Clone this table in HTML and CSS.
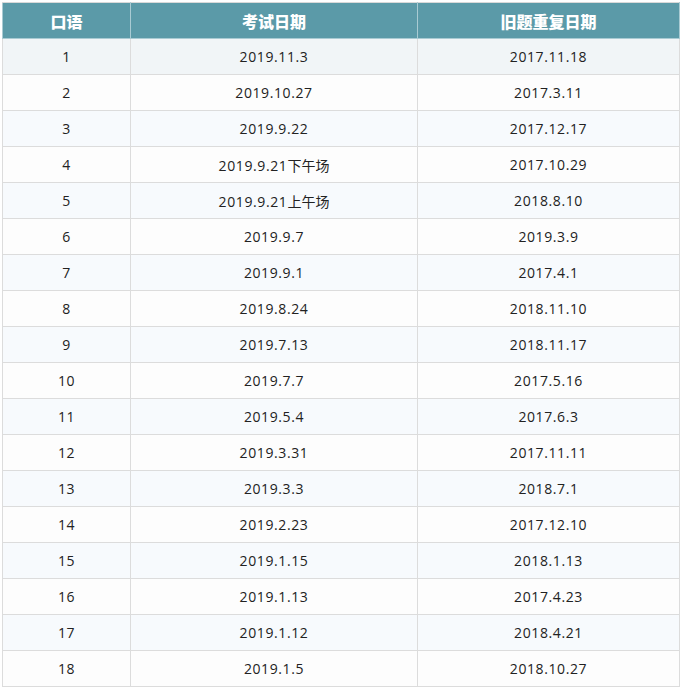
FILE: index.html
```html
<!DOCTYPE html>
<html lang="zh">
<head>
<meta charset="utf-8">
<link rel="stylesheet" href="styles.css">
</head>
<body>
<table class="tbl">
<colgroup><col class="c1"><col class="c2"><col class="c3"></colgroup>
<thead>
<tr><th>口语</th><th>考试日期</th><th>旧题重复日期</th></tr>
</thead>
<tbody>
<tr class="hl"><td>1</td><td>2019.11.3</td><td>2017.11.18</td></tr>
<tr><td>2</td><td>2019.10.27</td><td>2017.3.11</td></tr>
<tr class="alt"><td>3</td><td>2019.9.22</td><td>2017.12.17</td></tr>
<tr><td>4</td><td>2019.9.21<span class="cjk">下午场</span></td><td>2017.10.29</td></tr>
<tr class="alt"><td>5</td><td>2019.9.21<span class="cjk">上午场</span></td><td>2018.8.10</td></tr>
<tr><td>6</td><td>2019.9.7</td><td>2019.3.9</td></tr>
<tr class="alt"><td>7</td><td>2019.9.1</td><td>2017.4.1</td></tr>
<tr><td>8</td><td>2019.8.24</td><td>2018.11.10</td></tr>
<tr class="alt"><td>9</td><td>2019.7.13</td><td>2018.11.17</td></tr>
<tr><td>10</td><td>2019.7.7</td><td>2017.5.16</td></tr>
<tr class="alt"><td>11</td><td>2019.5.4</td><td>2017.6.3</td></tr>
<tr><td>12</td><td>2019.3.31</td><td>2017.11.11</td></tr>
<tr class="alt"><td>13</td><td>2019.3.3</td><td>2018.7.1</td></tr>
<tr><td>14</td><td>2019.2.23</td><td>2017.12.10</td></tr>
<tr class="alt"><td>15</td><td>2019.1.15</td><td>2018.1.13</td></tr>
<tr><td>16</td><td>2019.1.13</td><td>2017.4.23</td></tr>
<tr class="alt"><td>17</td><td>2019.1.12</td><td>2018.4.21</td></tr>
<tr><td>18</td><td>2019.1.5</td><td>2018.10.27</td></tr>
</tbody>
</table>
</body>
</html>
```
FILE: styles.css
```css
html, body { margin: 0; padding: 0; background: #fff; }
body { padding: 2px 0 0 2px; }
.tbl {
  border-collapse: collapse;
  table-layout: fixed;
  width: 677px;
  font-family: "Open Sans", "Noto Sans CJK SC", sans-serif;
  font-size: 14px;
  color: #222;
}
.c1 { width: 128px; }
.c2 { width: 287px; }
.c3 { width: 262px; }
.tbl th {
  background: #5b9aa8;
  color: #fff;
  font-family: "Noto Sans CJK SC", sans-serif;
  font-weight: 900;
  font-size: 16px;
  height: 35px;
  padding: 0;
  border: 1px solid #a9cbd3;
  border-top: 1px solid #d9d9d9;
  text-align: center;
}
.tbl td {
  height: 35px;
  padding: 0;
  text-align: center;
  letter-spacing: 0.6px;
  border: 1px solid #dcdcdc;
  background: #fdfdfd;
}
.cjk { letter-spacing: 0; }
.tbl tr.alt td { background: #f7fafd; }
.tbl tr.hl td { background: #f1f5f7; }
```
